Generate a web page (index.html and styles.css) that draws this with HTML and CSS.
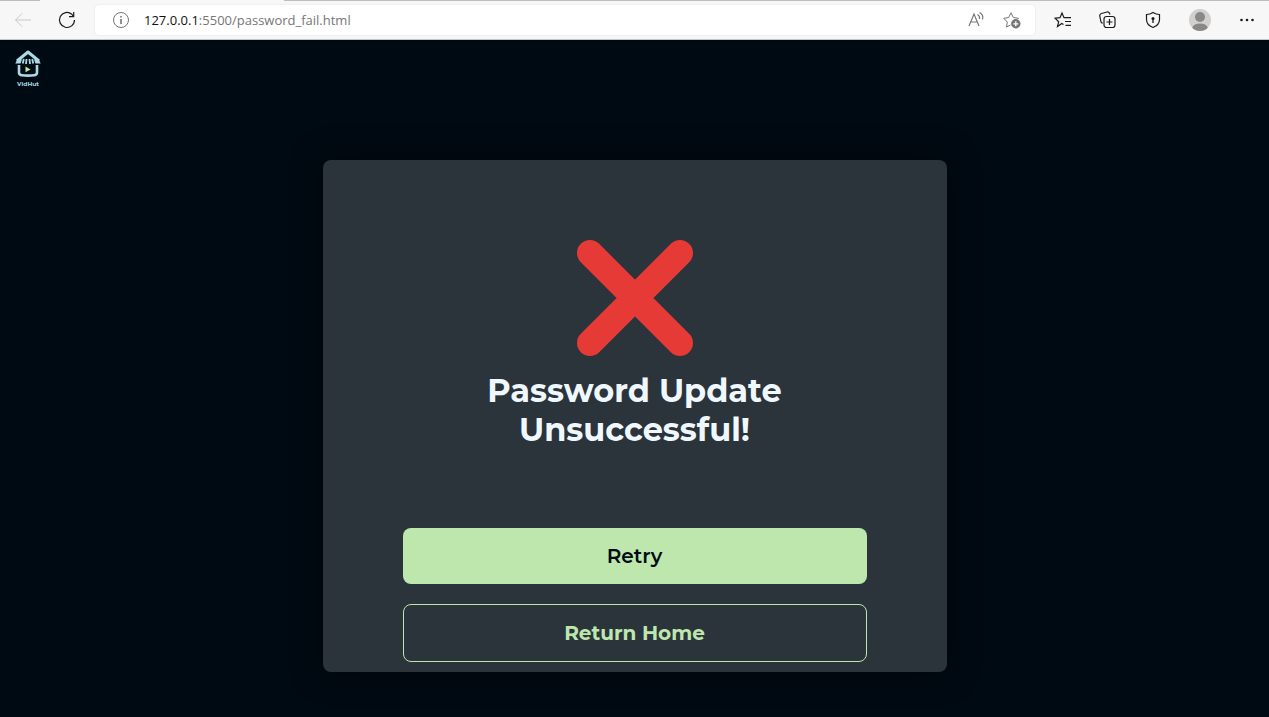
FILE: index.html
```html
<!DOCTYPE html>
<html lang="en">
<head>
<meta charset="utf-8">
<meta name="viewport" content="width=device-width, initial-scale=1">
<title>VidHut - Password Update Unsuccessful</title>
<link rel="stylesheet" href="styles.css">
</head>
<body>
<div class="tab-edge"><span class="tab-edge-left"></span><span class="tab-edge-active"></span><span class="tab-edge-right"></span></div>
<header class="toolbar">
  <div class="nav">
    <button class="tool faded" aria-label="Back" disabled>
      <svg width="18" height="18" viewBox="0 0 18 18"><path d="M17 9H1.500M8 2.500 1.500 9 8 15.500"/></svg>
    </button>
    <button class="tool" aria-label="Refresh">
      <svg width="18" height="18" viewBox="0 0 18 18"><path d="M16.500 9A7.500 7.500 0 1 1 13.800 3.200L15.500 5.500M15.700 1V5.700H11" stroke-width="1.200"/></svg>
    </button>
  </div>
  <div class="address">
    <button class="tool grey" aria-label="Site information">
      <svg width="18" height="18" viewBox="0 0 18 18"><circle cx="9" cy="9" r="7.500"/><path d="M9 8V13M9 5V6.500" stroke-width="1.600"/></svg>
    </button>
    <div class="url" role="textbox" aria-label="Address"><span class="host">127.0.0.1</span>:5500/password_fail.html</div>
    <button class="tool grey" aria-label="Read aloud">
      <svg width="18" height="18" viewBox="0 0 18 18"><path d="M2 15 7 3 12 15M3.800 11H10.200M10.500 3.500Q13 5 12.500 8M12.500 1.500Q17 4 15.500 8.500" stroke-width="1.200"/></svg>
    </button>
    <button class="tool grey" aria-label="Add to favorites">
      <svg width="18" height="18" viewBox="0 0 18 18"><path d="M7.500 14 3.500 16 4.300 11 .8 7.300 5.700 6.500 8 1.800 10.300 6.500 15.500 7.300 14.300 8.500"/><circle cx="12.800" cy="12.800" r="4.700" fill="currentColor" stroke="none"/><path d="M10.300 12.800H15.300M12.800 10.300V15.300" stroke="#fff" stroke-width="1.300"/></svg>
    </button>
  </div>
  <div class="actions">
    <button class="tool" aria-label="Favorites">
      <svg width="18" height="18" viewBox="0 0 18 18"><path d="M9.500 13.500 7.800 12.500 3.500 15.500 4.700 10.700 1 7.200 6 6.700 8 2 10 6.700H17M11 10.500H17M11.500 14.300H17" stroke-width="1.200"/></svg>
    </button>
    <button class="tool" aria-label="Collections">
      <svg width="18" height="18" viewBox="0 0 18 18"><path d="M3.500 12.500 2 11 .8 5Q.6 3 2.400 2.500L8 1Q10 .7 10.700 2.700L11 3.500" stroke-width="1.200"/><rect x="5" y="5.500" width="11" height="11" rx="2.500" stroke-width="1.200"/><path d="M10.500 8V14M7.500 11H13.500" stroke-width="1.200"/></svg>
    </button>
    <button class="tool" aria-label="Security">
      <svg width="18" height="18" viewBox="0 0 18 18"><path d="M9 1.500Q12 3.500 15.500 3.500V8.500Q15.500 14 9 16.500 2.500 14 2.500 8.500V3.500Q6 3.500 9 1.500Z" stroke-width="1.200"/><circle cx="9" cy="7.500" r="1.500" fill="currentColor" stroke="none"/><path d="M9 8V12" stroke-width="1.300"/></svg>
    </button>
    <button class="tool profile" aria-label="Profile">
      <svg width="22" height="22" viewBox="0 0 22 22" stroke="none"><circle cx="11" cy="11" r="11" fill="#d2d0ce"/><circle cx="11" cy="8" r="5" fill="#8a8886"/><path d="M3.200 18.700Q5 14.500 11 14.500T18.800 18.700Q15.500 22 11 22T3.200 18.700Z" fill="#8a8886"/></svg>
    </button>
    <button class="tool" aria-label="Settings and more">
      <svg width="18" height="18" viewBox="0 0 18 18" stroke="none"><g fill="currentColor"><circle cx="3.500" cy="9" r="1.300"/><circle cx="9" cy="9" r="1.300"/><circle cx="14.500" cy="9" r="1.300"/></g></svg>
    </button>
  </div>
</header>
<div class="page">
  <a class="logo" href="#" aria-label="VidHut home">
    <svg width="26" height="28" viewBox="0 0 26 28"><path d="M2 11 13 2 24 11" stroke="#add8e6" stroke-width="3" stroke-linejoin="round"/><path d="M.3 13.500 2.500 9 7 9.500 5.500 13.500ZM25.700 13.500 23.500 9 19 9.500 20.500 13.500Z" fill="#add8e6"/><path d="M8.800 9 7.800 13.500M11.500 9 11 14M14.500 9 15 14M17.200 9 18.200 13.500" stroke="#add8e6" stroke-width="1.800"/><path d="M4 15V22.500Q4 25 7 25.300 13 26 19 25.300 22 25 22 22.500V15" stroke="#add8e6" stroke-width="2.600"/><path d="M10.500 16.500 15.500 19.400 10.500 22.300Z" fill="#bee7ae"/></svg>
    <span class="logo-name">VidHut</span>
  </a>
  <main class="card">
    <svg class="cross" width="116" height="116" viewBox="0 0 116 116" aria-hidden="true"><path d="M13 13 103 103M103 13 13 103" stroke="#e63a36" stroke-width="26" stroke-linecap="round"/></svg>
    <h1 class="title">Password Update Unsuccessful!</h1>
    <div class="buttons">
      <button class="btn btn-primary">Retry</button>
      <button class="btn btn-outline">Return Home</button>
    </div>
  </main>
</div>
</body>
</html>
```

FILE: styles.css
```css
* { box-sizing: border-box; }

body {
  margin: 0;
  min-height: 100vh;
  display: flex;
  flex-direction: column;
  background: #000a12;
  font-family: Montserrat, Inter, sans-serif;
}

svg { display: block; fill: none; }

button { font: inherit; cursor: pointer; }

.tab-edge {
  display: flex;
  height: 1px;
  background: #f7f7f7;
}
.tab-edge-left { width: 40px; background: #bdbdbd; }
.tab-edge-active { width: 244px; }
.tab-edge-right { flex: 1; background: #bdbdbd; }

.toolbar {
  display: flex;
  align-items: center;
  height: 39px;
  padding-right: 13px;
  background: #f7f7f7;
  border-bottom: 1px solid #c4c6c8;
}
.nav {
  display: flex;
  gap: 26px;
  width: 95px;
  padding-left: 14px;
}
.tool {
  padding: 0;
  border: 0;
  background: none;
  color: #1b1b1b;
  stroke: currentColor;
}
.faded { color: #c8c8c8; }
.grey { color: #767676; }

.address {
  flex: 1;
  display: flex;
  align-items: center;
  gap: 18px;
  height: 30px;
  padding: 0 14px 0 17px;
  background: #fff;
  border-radius: 4px;
  box-shadow: 0 0 2px #0000001a;
}
.url {
  flex: 1;
  margin-left: -4px;
  font: 13px/20px "Segoe UI", "Open Sans", sans-serif;
  color: #767676;
  white-space: nowrap;
}
.host { color: #111; }

.actions {
  display: flex;
  align-items: center;
  gap: 27px;
  padding-left: 19px;
}

.page {
  flex: 1;
  display: flex;
  flex-direction: column;
  padding: 10px 15px 45px;
}
.logo {
  align-self: flex-start;
  display: flex;
  flex-direction: column;
  align-items: center;
  gap: 2px;
  height: 40px;
  color: #add8e6;
  text-decoration: none;
}
.logo-name { font-size: 6px; line-height: 8px; font-weight: 700; }

.card {
  width: 100%;
  max-width: 624px;
  margin: 70px auto 0;
  padding: 80px 80px 10px;
  background: #2b333b;
  border-radius: 8px;
  box-shadow: 0 0 30px #00000a80;
}
.cross { margin: 0 auto; }
.title {
  max-width: 320px;
  margin: 15px auto 0;
  font-size: 32px;
  line-height: 39px;
  font-weight: 700;
  text-align: center;
  color: #f0f8ff;
}
.buttons {
  display: grid;
  gap: 20px;
  margin-top: 79px;
}
.btn {
  padding: 16px;
  border: 0;
  border-radius: 8px;
  font-size: 20px;
  line-height: 24px;
}
.btn-primary {
  background: #bee7ae;
  color: #000a12;
  font-weight: 600;
}
.btn-outline {
  border: 1px solid #bee7ae;
  background: transparent;
  color: #bee7ae;
  font-weight: 700;
}
```
